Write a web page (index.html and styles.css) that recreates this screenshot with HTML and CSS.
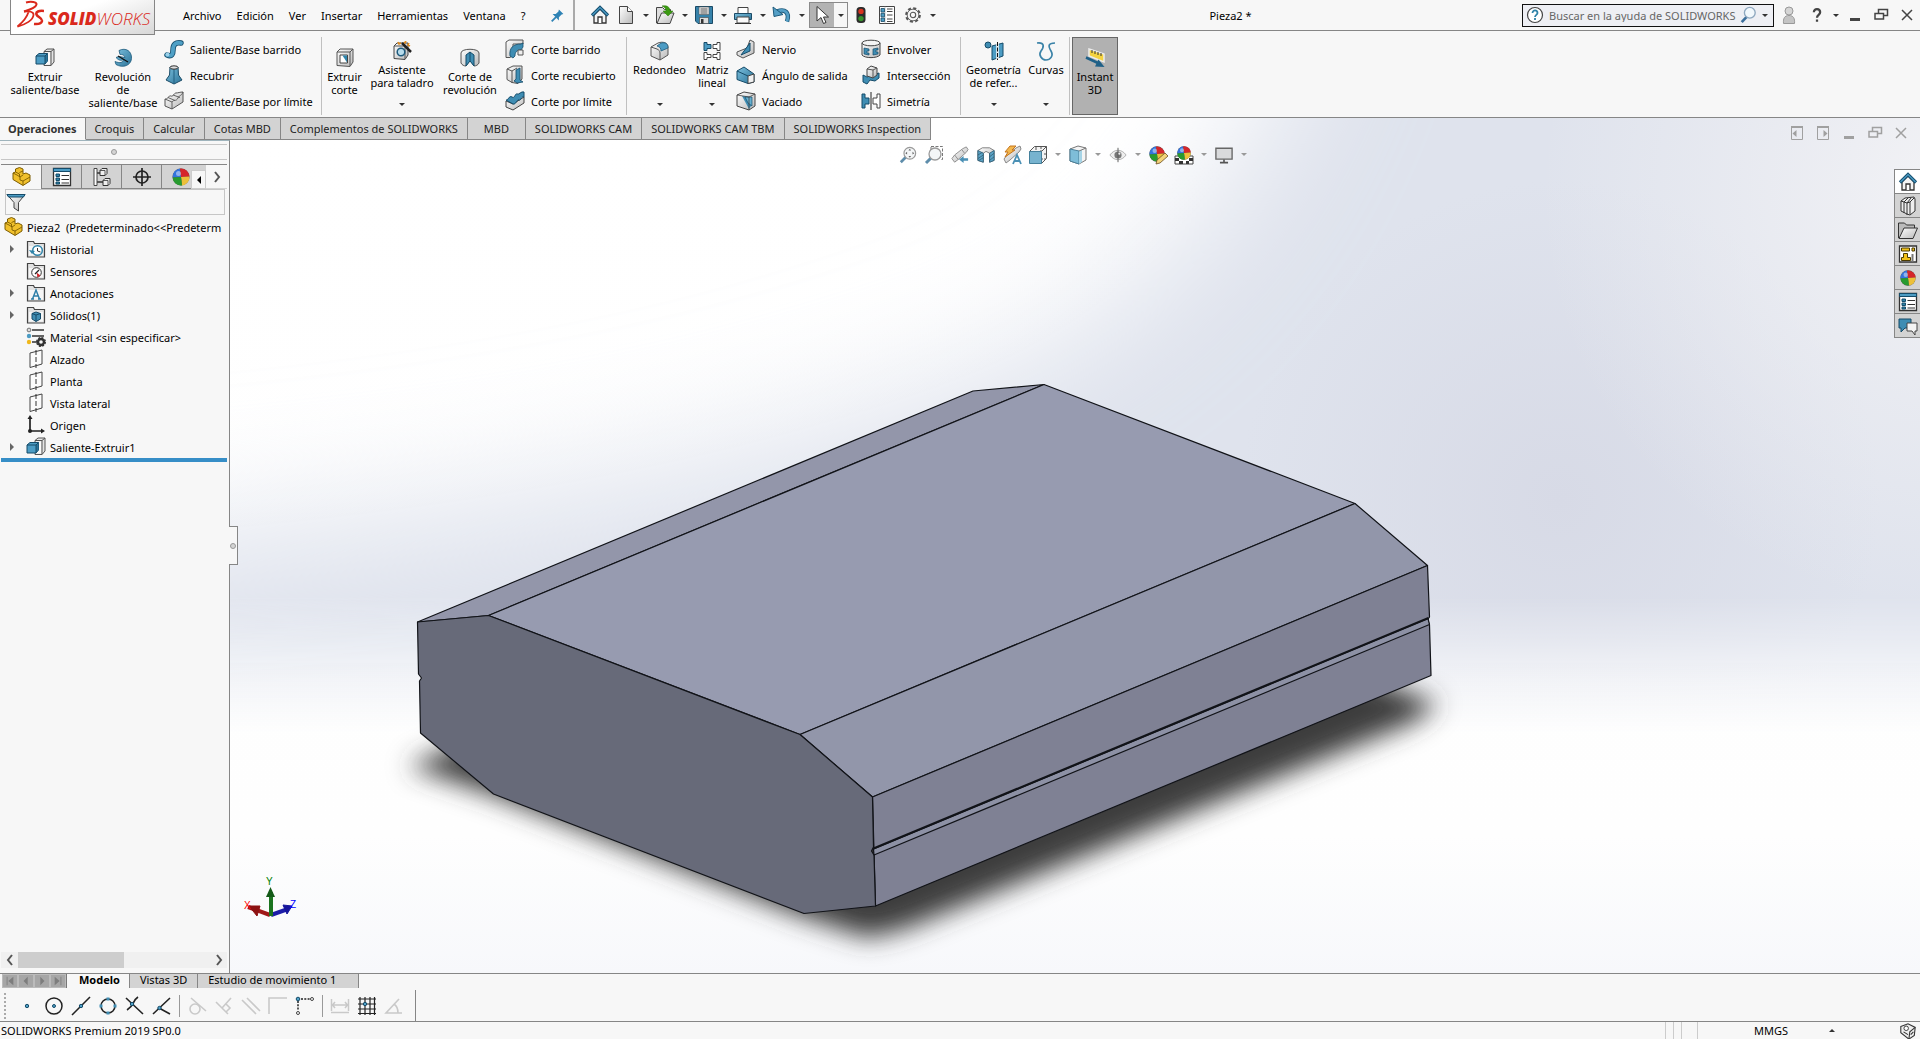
FILE: index.html
```html
<!DOCTYPE html>
<html lang="es">
<head>
  <meta charset="utf-8">
  <meta name="viewport" content="width=device-width">
  <title>Pieza2 - SOLIDWORKS</title>
  <link rel="stylesheet" href="styles.css">
</head>
<body>
  <!-- icon set, all on a 20 x 20 grid -->
  <svg class="symbols" aria-hidden="true">
    <defs>
      <linearGradient id="g-blue" x1="0" y1="0" x2="1" y2="1"><stop offset="0" stop-color="#7cc0de"/><stop offset="1" stop-color="#2b7398"/></linearGradient>
      <linearGradient id="g-grey" x1="0" y1="0" x2="1" y2="1"><stop offset="0" stop-color="#fff"/><stop offset="1" stop-color="#b9b9b9"/></linearGradient>
    </defs>
    <symbol id="i-pin" viewBox="0 0 20 20"><path d="M11 4l5 5-2 .5-3 3 0 3.500-7-7 3.500 0 3-3z" fill="#2f83b5"/><path d="M8 12l-5 5" stroke="#2f83b5" stroke-width="2"/></symbol>
    <symbol id="i-home" viewBox="0 0 20 20"><path d="M4 10v8h12v-8l-6-6z" fill="#f4f4f4" stroke="#333" stroke-width="1.300"/><path d="M8 18v-6h4v6" fill="#fff" stroke="#333" stroke-width="1.300"/><path d="M2 10.500l8-8 8 8" fill="none" stroke="#154f70" stroke-width="3.200"/><path d="M2.500 10l7.500-7.500 7.500 7.500" fill="none" stroke="#4c9cc4" stroke-width="1.200"/></symbol>
    <symbol id="i-doc" viewBox="0 0 20 20"><path d="M3.500 1.500h8l5 5v12h-13z" fill="url(#g-grey)" stroke="#444"/><path d="M11.500 1.500v5h5" fill="#fff" stroke="#444"/></symbol>
    <symbol id="i-open" viewBox="0 0 20 20"><path d="M1.500 18V2.500h6l2 2h6V8" fill="#ddd" stroke="#444"/><path d="M2 18.500L6.500 8H19l-4 10.500z" fill="url(#g-grey)" stroke="#444"/><path d="M7 1c5-1 8 1 8 5h3l-5 5-5-5h3c0-2-1-4-4-5z" fill="#3c9a12" stroke="#2b7a08" stroke-width=".5"/></symbol>
    <symbol id="i-save" viewBox="0 0 20 20"><path d="M1.500 1.500h17v17H4l-2.500-2.500z" fill="#3682aa" stroke="#1b4a66"/><path d="M5 2h10v7.500H5z" fill="#eee" stroke="#555" stroke-width=".6"/><path d="M6.500 4h7M6.500 6h7M6.500 8h7" stroke="#555"/><path d="M5.500 12.500h9v6h-9z" fill="#ddd" stroke="#444" stroke-width=".6"/><path d="M7 14h2.500v4.500H7z" fill="#333"/></symbol>
    <symbol id="i-print" viewBox="0 0 20 20"><path d="M5 8V2.500h10V8" fill="#fff" stroke="#444"/><path d="M1.500 8.500h17v6h-17z" fill="url(#g-blue)" stroke="#1b4a66"/><path d="M4 12h12v6H4z" fill="#fafafa" stroke="#444"/><path d="M2 18.500h16" stroke="#333"/></symbol>
    <symbol id="i-undo" viewBox="0 0 20 20"><path d="M5 6.500c8-3 13 1 10 10" fill="none" stroke="#1d5a7c" stroke-width="4.500"/><path d="M5 6.500c8-3 13 1 10 10" fill="none" stroke="#549fc6" stroke-width="2.800"/><path d="M1 2l1 9.500 9-2z" fill="#549fc6" stroke="#1d5a7c"/></symbol>
    <symbol id="i-cursor" viewBox="0 0 20 20"><path d="M5 1.500v14.500l4-3.500 2.500 6 2.500-1-2.500-5.500h5z" fill="#fff" stroke="#333"/></symbol>
    <symbol id="i-traffic" viewBox="0 0 20 20"><rect x="5" y="1" width="10" height="18" rx="4" fill="#2c2c2c"/><circle cx="10" cy="6" r="3" fill="#d9331f"/><circle cx="10" cy="14" r="3" fill="#37922c"/></symbol>
    <symbol id="i-options" viewBox="0 0 20 20"><path d="M2.500 1.500h15v17h-15z" fill="#fff" stroke="#444"/><path d="M8 1.500v17" stroke="#aaa" stroke-width=".6"/><path d="M4 3.500h3.500v3.500H4zM4 8.300h3.500v3.500H4zM4 13h3.500v3.500H4z" fill="#4c9cc4" stroke="#1b4a66" stroke-width=".8"/><path d="M10 4h5.500M10 6.500h5.500M10 10h5.500M10 14h5.500M10 16.500h5.500" stroke="#444"/></symbol>
    <symbol id="i-gear" viewBox="0 0 20 20"><circle cx="10" cy="10" r="7.500" fill="none" stroke="#555" stroke-width="2.500" stroke-dasharray="3.400 2.490"/><circle cx="10" cy="10" r="6.500" fill="#f7f7f7" stroke="#555"/><circle cx="10" cy="10" r="3" fill="#f7f7f7" stroke="#555" stroke-width="1.200"/></symbol>
    <symbol id="i-help" viewBox="0 0 20 20"><circle cx="10" cy="10" r="7.500" fill="#fff" stroke="#444" stroke-width="1.200"/><path d="M7.500 8c0-3.500 5-3.300 5 0 0 1.800-2.500 2-2.500 4M10 13v2" fill="none" stroke="#2f83a8" stroke-width="1.800"/></symbol>
    <symbol id="i-question" viewBox="0 0 20 20"><path d="M6.500 7c0-5 7-4.500 7 0 0 2.800-3.500 2.800-3.500 6M10 15v2.500" fill="none" stroke="#444" stroke-width="2.500"/></symbol>
    <symbol id="i-lens" viewBox="0 0 20 20"><path d="M8.500 12L3 18" stroke="#3c6f9c" stroke-width="3"/><circle cx="12" cy="7.500" r="6" fill="#f2f8fc" stroke="#8fa8bf" stroke-width="1.500"/></symbol>
    <symbol id="i-user" viewBox="0 0 20 20"><path d="M4.500 18.500c-.5-5 1-8 5.500-8s6 3 5.500 8z" fill="#c4c4c4" stroke="#999"/><circle cx="10" cy="6" r="4" fill="#d5d5d5" stroke="#999"/></symbol>
    <symbol id="i-min" viewBox="0 0 20 20"><path d="M5 14.500h10" stroke="currentColor" stroke-width="3"/></symbol>
    <symbol id="i-restore" viewBox="0 0 20 20"><path d="M7.500 8V4.500h9v6H13" fill="none" stroke="currentColor" stroke-width="1.500"/><path d="M4 8.500h8.500V14H4z" fill="none" stroke="currentColor" stroke-width="1.500"/></symbol>
    <symbol id="i-close" viewBox="0 0 20 20"><path d="M5 5l10 10M15 5L5 15" stroke="currentColor" stroke-width="1.500"/></symbol>
    <symbol id="i-paneleft" viewBox="0 0 20 20"><path d="M4.500 4h11v12.500h-11z" fill="none" stroke="currentColor"/><path d="M4 4h12" stroke="currentColor" stroke-width="2"/><path d="M9.500 7v7L5.500 10.500z" fill="currentColor"/></symbol>
    <symbol id="i-paneright" viewBox="0 0 20 20"><path d="M4.500 4h11v12.500h-11z" fill="none" stroke="currentColor"/><path d="M4 4h12" stroke="currentColor" stroke-width="2"/><path d="M10.500 7v7l4-3.500z" fill="currentColor"/></symbol>

    <symbol id="i-extrude" viewBox="0 0 20 20"><path d="M9 3.500l3-2.500h7v13l-3 3.500H9z" fill="#e4e4e4" stroke="#555"/><path d="M9 3.500h7v14M16 3.500L19 1" fill="none" stroke="#555"/><path d="M10 4.500h5v12h-5z" fill="#fafafa"/><path d="M1 8l3-2.500h8.500V13L10 16H1z" fill="#4c9cc4" stroke="#154b69"/><path d="M10 8l2.500-2.500V13L10 16z" fill="#2b7398"/><path d="M1 8h9v8M10 8l2.500-2.500" fill="none" stroke="#154b69"/></symbol>
    <symbol id="i-revolve" viewBox="0 0 20 20"><path d="M6 2.500c7-3.500 13 1 12.500 8S10 20.500 3 16.500l-1-3c5 2 8 1 9-2-4 2-6 0-8-2l3-1 6 1c-1-3-3-3-5-3z" fill="url(#g-blue)" stroke="#1d5a7c" stroke-width=".8"/><path d="M5 8l10 6" stroke="#111" stroke-width="1.300"/></symbol>
    <symbol id="i-sweep" viewBox="0 0 20 20"><path d="M3 16c5 2 6-1 6-5 0-6 3-8 8-7" fill="none" stroke="#164e6d" stroke-width="5.500" stroke-linecap="round"/><path d="M3 16c5 2 6-1 6-5 0-6 3-8 8-7" fill="none" stroke="#4fa0c6" stroke-width="3.800" stroke-linecap="round"/><circle cx="3.500" cy="15.500" r="1.900" fill="#9bd0e8"/></symbol>
    <symbol id="i-loft" viewBox="0 0 20 20"><path d="M6 2h8l.5 8 3.500 5-8 4-8-4 3.500-5z" fill="url(#g-blue)" stroke="#1d4d68"/><path d="M10 3v16" stroke="#205f80"/><ellipse cx="10" cy="2.500" rx="4" ry="1.700" fill="#ddd" stroke="#333"/></symbol>
    <symbol id="i-boundary" viewBox="0 0 20 20"><path d="M1 8c2 1 4-4 6-3s3-3 5-3 4-1 7-1v10l-11 7-7-3z" fill="url(#g-grey)" stroke="#555"/><path d="M1 8l7 3c2-3 4 0 6-4s3-1 5-6M8 11v7M4 6.500l7 3M9 4l7 2.500" fill="none" stroke="#555" stroke-width=".9"/></symbol>
    <symbol id="i-cutextrude" viewBox="0 0 20 20"><path d="M2 4l3-3h13v13l-3 4.500-13-1z" fill="url(#g-grey)" stroke="#555"/><path d="M2 4h13v14M15 4l3-3" fill="none" stroke="#555"/><path d="M5 7h7.500v8H5z" fill="#fff" stroke="#444"/><path d="M7.500 7.500H12v7z" fill="#2f86ad"/></symbol>
    <symbol id="i-hole" viewBox="0 0 20 20"><path d="M2 5l3-3h11v12l-3 4.500-11-1z" fill="url(#g-grey)" stroke="#444"/><path d="M2 5h11v13" fill="none" stroke="#555"/><circle cx="9" cy="11" r="3.800" fill="#b8dcec" stroke="#1d5a7c" stroke-width="1.500"/><path d="M10 2l9 9" stroke="#222" stroke-width="2.500"/><path d="M6 1l1 2 2-1M12 1l1 1 1-2M17 2l-1 2 2 1" stroke="#e08a1c" stroke-width="1.500" fill="none"/></symbol>
    <symbol id="i-cutrevolve" viewBox="0 0 20 20"><path d="M1 5c0-5 18-5 18 0v10c-1 2-3 3-5 3l-4-6-4 6c-2 0-4-1-5-3z" fill="url(#g-grey)" stroke="#555"/><path d="M6 7l4-3 4 3v11l-4-5-4 5z" fill="#3f8db3" stroke="#154b69"/><path d="M10 4v9" stroke="#154b69"/></symbol>
    <symbol id="i-cutsweep" viewBox="0 0 20 20"><path d="M1 3l3-2h14v4H8v11l-3 2.500H1z" fill="url(#g-grey)" stroke="#555"/><path d="M5 17c-1-8 3-12 11-12l2-1v4l-2 3c-5 0-6 3-6 6l-2 2z" fill="#3f8db3" stroke="#154b69" stroke-width=".8"/><path d="M13 11h5v5h-5z" fill="#eee" stroke="#555"/></symbol>
    <symbol id="i-cutloft" viewBox="0 0 20 20"><path d="M2 4l6-3h9v13l-4 4.500-6-1-5-3z" fill="url(#g-grey)" stroke="#555"/><path d="M2 4l5 2v12M7 6l5-3" fill="none" stroke="#555"/><path d="M11 5l4-2v12l3 2-6 1-3-2 2-2z" fill="#3f8db3" stroke="#154b69" stroke-width=".8"/></symbol>
    <symbol id="i-cutboundary" viewBox="0 0 20 20"><path d="M1 10l7 3 11-7v6l-11 7-7-3z" fill="url(#g-grey)" stroke="#444"/><path d="M1 9c2 1 3-5 6-3s3-4 5-3 4-3 7-2v5c-3-1-3 4-5 3s-3 5-6 4z" fill="#3f8db3" stroke="#154b69"/></symbol>
    <symbol id="i-fillet" viewBox="0 0 20 20"><path d="M1 6l7-4c5-2 10 0 10 4v8l-8 5-9-4z" fill="url(#g-grey)" stroke="#555"/><path d="M1 6l6 2c2 1 3 2 3 4v7" fill="none" stroke="#555"/><path d="M7 5l4-3c5-1 7 1 7 5l-7 3c0-3-1-4-4-5z" fill="#4c9cc4" stroke="#1d5a7c" stroke-width=".8"/></symbol>
    <symbol id="i-pattern" viewBox="0 0 20 20"><path d="M2 1.500h3v2h4v4H5v2H2z" fill="#4c9cc4" stroke="#154b69"/><path d="M18 1.500h-3v2h-4v4h4v2h3zM2 11.500h3v2h4v3H5v2H2zM18 11.500h-3v2h-4v3h4v2h3z" fill="#fff" stroke="#444"/></symbol>
    <symbol id="i-rib" viewBox="0 0 20 20"><path d="M14 1l4 2v11l-11 5-6-3v-3l10-4z" fill="url(#g-grey)" stroke="#555"/><path d="M14 4v8l-9 4z" fill="#3f8db3" stroke="#154b69"/></symbol>
    <symbol id="i-draft" viewBox="0 0 20 20"><path d="M1 6l7-4 10 7v8l-6 1.500-11-4z" fill="url(#g-blue)" stroke="#154b69"/><path d="M12 11l6-2v8l-6 1.500z" fill="#f0f0f0" stroke="#444"/><path d="M1 6l11 5" stroke="#154b69"/></symbol>
    <symbol id="i-shell" viewBox="0 0 20 20"><path d="M1 4l7-3 11 2v12l-6 4-12-4z" fill="url(#g-grey)" stroke="#444"/><path d="M6 5l9 1v9l-2 3z" fill="#3f8db3"/><path d="M9 6h7v9l-4-3z" fill="#65b0d0" stroke="#154b69" stroke-width=".7"/><path d="M1 4l12 2v13M13 6l6-3" fill="none" stroke="#444" stroke-width=".8"/></symbol>
    <symbol id="i-wrap" viewBox="0 0 20 20"><path d="M1 4v12c3 3.500 15 3.500 18 0V4" fill="url(#g-grey)" stroke="#444"/><ellipse cx="10" cy="4" rx="9" ry="2.800" fill="#f5f5f5" stroke="#444"/><path d="M3 9l5 1v2H6v2h2v2l-5-1zM17 9l-5 1v6l5-1v-2h-2v-2h2z" fill="#3f8db3" stroke="#154b69" stroke-width=".7"/></symbol>
    <symbol id="i-intersect" viewBox="0 0 20 20"><path d="M2 10l4 2 12-4v5l-4 3-5-1-3 4-4-2z" fill="#3f8db3" stroke="#154b69"/><path d="M6 4l4-3 6 2v7l-4 3-6-2z" fill="url(#g-grey)" stroke="#444"/><path d="M6 4l6 1v8M12 5l4-2" fill="none" stroke="#555"/></symbol>
    <symbol id="i-mirror" viewBox="0 0 20 20"><path d="M1 3h3v4h4v6H4v4H1z" fill="#3f8db3" stroke="#154b69"/><path d="M19 3h-3v4h-4v6h4v4h3z" fill="#fff" stroke="#444"/><path d="M10 1v18" stroke="#222"/></symbol>
    <symbol id="i-refgeom" viewBox="0 0 20 20"><circle cx="4" cy="4" r="3" fill="#3f8db3" stroke="#154b69"/><path d="M8 5l11-3v13l-11 4z" fill="#4c9cc4" stroke="#154b69"/><path d="M13.500 1v18" stroke="#f7f7f7" stroke-width="2.500"/><path d="M13.500 1v18" stroke="#111" stroke-dasharray="4 1.500"/></symbol>
    <symbol id="i-curves" viewBox="0 0 20 20"><path d="M1 2c8-1 7 4 4 8s1 9 5 9 8-4 5-9-3-8 4-8" fill="none" stroke="#3b83a8" stroke-width="1.700"/></symbol>
    <symbol id="i-instant" viewBox="0 0 20 20"><path d="M4 1l15 5v8L4 8z" fill="#f5d33f" stroke="#ececec" stroke-width="1.500"/><path d="M7 2v3M10 3v3M13 4v3M16 5v3" stroke="#333"/><path d="M1 9.500l12 5.500" stroke="#1f6087" stroke-width="2.500"/><path d="M13.500 11.500l6 7.500-9.500-.5z" fill="#1f6087"/></symbol>

    <symbol id="i-zoomfit" viewBox="0 0 20 20"><path d="M8 12l-6 6" stroke="#5e8dab" stroke-width="3"/><circle cx="12" cy="8" r="6.500" fill="#f4f6f7" stroke="#9a9a9a" stroke-width="1.300"/><path d="M12 3l1.500 2h-3zM12 13l1.500-2h-3zM7 8l2-1.500v3zM17 8l-2-1.500v3z" fill="#666"/></symbol>
    <symbol id="i-zoomarea" viewBox="0 0 20 20"><path d="M7 1.500h11.500v13H16M7 2v3" fill="none" stroke="#777" stroke-dasharray="3 1.500"/><path d="M7 13l-5 5" stroke="#5e8dab" stroke-width="3"/><circle cx="11" cy="9" r="6" fill="#f4f6f7" stroke="#9a9a9a" stroke-width="1.300"/></symbol>
    <symbol id="i-prevview" viewBox="0 0 20 20"><path d="M1 14l3-4 9-7 4-2 2 3-2 3-9 8-4 3z" fill="url(#g-grey)" stroke="#888"/><path d="M12 4l3 4M4 10l4 5" stroke="#888"/><path d="M9 15l5-4v2.500h5v3h-5V19z" fill="#4a90b5"/></symbol>
    <symbol id="i-section" viewBox="0 0 20 20"><path d="M1 5l5-3h8l5 3v11l-5 2V8l-4-2-3 2v10l-6-2z" fill="url(#g-grey)" stroke="#777"/><path d="M1 5l6 3v10l-6-2zM19 5l-5 3v10l5-2z" fill="#5ba4c7" stroke="#33637c"/><path d="M1 10l5-3M1 14l6-4M2 16l5-3M14 12l5-4M14 16l5-4" stroke="#2d566c" stroke-width=".8"/></symbol>
    <symbol id="i-dynview" viewBox="0 0 20 20"><path d="M2 14l3-4 9-7 4-2 1 3-2 3-9 8-4 3z" fill="url(#g-grey)" stroke="#888"/><path d="M8 1h6l-4 4h3L3 12l3-5H3z" fill="#f3b74d" stroke="#c4751e"/><path d="M11 19l4-9 4 9M12.500 16h5" fill="none" stroke="#4a90b5" stroke-width="1.800"/></symbol>
    <symbol id="i-orient" viewBox="0 0 20 20"><path d="M1.500 6.500l5-5h12v12l-5 5" fill="#f3f3f3" stroke="#555"/><path d="M8 2v12h10M13 1v5M19 9h-4" fill="none" stroke="#555" stroke-dasharray="3 1"/><path d="M1.500 6.500h12v12h-12z" fill="#77b3cf" stroke="#44809c"/><path d="M13.500 6.500l5-5" stroke="#555"/></symbol>
    <symbol id="i-display" viewBox="0 0 20 20"><path d="M2 4l8-3 8 2v12l-7 4-9-3z" fill="#f4f4f4" stroke="#777"/><path d="M2 4l9 2v13l-9-3z" fill="#7ebdd8" stroke="#4a7f99"/><path d="M14 5v12l-3 2V6z" fill="#a6d4e6"/><path d="M11 6l7-3" stroke="#777"/></symbol>
    <symbol id="i-eye" viewBox="0 0 20 20"><path d="M1 10c5-7 13-7 18 0-5 7-13 7-18 0z" fill="#eee" stroke="#aaa"/><circle cx="10" cy="10" r="4" fill="#777"/><path d="M10 2v16" stroke="#555"/><circle cx="11.500" cy="8.500" r="1.200" fill="#eee"/></symbol>
    <symbol id="i-ball" viewBox="0 0 20 20"><circle cx="10" cy="10" r="8.500" fill="#555"/><path d="M10 10L9 1.600A8.500 8.500 0 0 0 1.600 10.500z" fill="#3474dd"/><path d="M10 10L9 1.600A8.500 8.500 0 0 1 18.500 9.500z" fill="#d5262b"/><path d="M10 10l8.500-.5A8.500 8.500 0 0 1 11 18.400z" fill="#ecc03a"/><path d="M10 10l-8.400.5A8.500 8.500 0 0 0 11 18.400z" fill="#279b2f"/><circle cx="7.500" cy="6.500" r="2.500" fill="#fff" opacity=".45"/></symbol>
    <symbol id="i-appearance" viewBox="0 0 20 20"><use href="#i-ball" width="18" height="18"/><path d="M8 19l1-4 8-7 3 3-8 7z" fill="#f3d37a" stroke="#6b4b1e" stroke-width=".8"/></symbol>
    <symbol id="i-scene" viewBox="0 0 20 20"><path d="M1 11h18v8H1z" fill="#fff" stroke="#444"/><path d="M1 13h4v3H1zM15 13h4v3h-4zM5 16h4v3H5zM12 16h3v3h-3z" fill="#333"/><use href="#i-ball" x="2" width="16" height="16"/></symbol>
    <symbol id="i-monitor" viewBox="0 0 20 20"><path d="M1 2.500h18v12H1z" fill="#d9dadc" stroke="#666" stroke-width="1.500"/><path d="M10 15v3M5.500 18.500h9" stroke="#555" stroke-width="1.800"/></symbol>

    <symbol id="i-books" viewBox="0 0 20 20"><path d="M3 5l4-3 9-1 1 2v12l-5 4-3-1-6-3z" fill="#eee" stroke="#333"/><path d="M6 6v11M9 7v12M12 6v12M3 5l3 1 4-4M6 6l3 1 4-5M9 7l3-1 4-4" fill="none" stroke="#333"/></symbol>
    <symbol id="i-folder" viewBox="0 0 20 20"><path d="M.5 18V3h6l2 2h8v4" fill="#bbb" stroke="#333"/><path d="M1 18.500L6 8h13.500L15 18.500z" fill="url(#g-grey)" stroke="#333"/></symbol>
    <symbol id="i-palette" viewBox="0 0 20 20"><path d="M1.500 2h17v16h-17z" fill="#fff" stroke="#333" stroke-width="1.300"/><path d="M3.500 4h8v3h-8zM14 4h2.500v3H14zM5.500 9.500h4v4h3v3h-9v-3h2z" fill="#f2c21b" stroke="#4a3a00"/><path d="M14.500 10v8" stroke="#777" stroke-width="2"/></symbol>
    <symbol id="i-props" viewBox="0 0 20 20"><path d="M1.500 1.500h17v17h-17z" fill="#fff" stroke="#333" stroke-width="1.300"/><path d="M1.500 1.500h17v3h-17z" fill="#4c9cc4" stroke="#154b69"/><path d="M4 7h3.500v2.500H4zM4 11h3.500v2.500H4zM4 15h3.500v2H4z" fill="#2f83a8" stroke="#154b69"/><path d="M9.500 8.500H17M9.500 12.500H17M9.500 16H17" stroke="#333" stroke-width="1.200"/></symbol>
    <symbol id="i-chat" viewBox="0 0 20 20"><path d="M1 3h12v9H7l-4 4v-4H1z" fill="#3f8db3" stroke="#154b69"/><path d="M9 7h10v8h-2v4l-3-4H9z" fill="#f4f4f4" stroke="#444"/></symbol>

    <symbol id="i-part" viewBox="0 0 20 20"><path d="M2 6l2.500-1V2l4-1.500L12 2v5l3-1 4 2v6l-7 4.500L2 12.500z" fill="#f0c02c" stroke="#7d5c00"/><path d="M2 6l4 2 3 2v3l3 1v4M4.500 5l4 2v3M8.500 5.500L12 4M12 14l7-4M9 10l3-2" fill="none" stroke="#7d5c00" stroke-width=".9"/></symbol>
    <symbol id="i-config" viewBox="0 0 20 20"><path d="M5 6h3M5 15h6" fill="none" stroke="#333" stroke-width="1.300"/><path d="M2 1.500h3v17H2z" fill="#fff" stroke="#444"/><path d="M8 3.500l2-2h5v5l-2 2H8zM11 13.500l2-2h5v5l-2 2h-5z" fill="#eee" stroke="#333"/><path d="M8 3.500h5v5M11 13.500h5v5" fill="none" stroke="#333" stroke-width=".8"/></symbol>
    <symbol id="i-target" viewBox="0 0 20 20"><circle cx="10" cy="10" r="6" fill="none" stroke="#222" stroke-width="1.700"/><path d="M10 1v18M1 10h18" stroke="#222" stroke-width="1.700"/></symbol>
    <symbol id="i-filter" viewBox="0 0 20 20"><path d="M1 2.500h18l-6.500 8V19L8 16v-5.500z" fill="url(#g-grey)" stroke="#444"/><path d="M1 2.500h18L17.500 5h-15z" fill="#4c9cc4" stroke="#154b69"/></symbol>
    <symbol id="i-fold" viewBox="0 0 20 20"><path d="M1.500 18V2.500h6l1 2h10V18z" fill="#e2e2e2" stroke="#444" stroke-width="1.200"/><path d="M3 7h14v9.500H3z" fill="#f6f6f6"/></symbol>
    <symbol id="i-history" viewBox="0 0 20 20"><use href="#i-fold"/><circle cx="11.500" cy="11.500" r="4.800" fill="#fff" stroke="#2f83a8" stroke-width="1.500"/><path d="M11.500 9v3l3 1" fill="none" stroke="#333"/><path d="M3 11l3 4 3-3z" fill="#2f83a8"/></symbol>
    <symbol id="i-sensor" viewBox="0 0 20 20"><use href="#i-fold"/><circle cx="10.500" cy="11.500" r="4.800" fill="#fff" stroke="#333"/><path d="M10.500 11.500l4 3-3 2z" fill="#d5262b"/><path d="M9 13l4-4" stroke="#222" stroke-width="1.300"/></symbol>
    <symbol id="i-annot" viewBox="0 0 20 20"><use href="#i-fold"/><path d="M6.500 16l3.500-9 3.500 9M7.500 13h5M5 16h3M12 16h3" fill="none" stroke="#2f7fa8" stroke-width="1.500"/></symbol>
    <symbol id="i-solids" viewBox="0 0 20 20"><use href="#i-fold"/><path d="M6 8.500L10 7l4.500 1.500V14L10 16.500 6 14z" fill="#3f8db3" stroke="#154b69"/><path d="M6 8.500l4 1.500v6.500M10 10l4.500-1.500" fill="none" stroke="#154b69"/></symbol>
    <symbol id="i-material" viewBox="0 0 20 20"><path d="M6 3h12M6 9h12M6 15h6" stroke="#333" stroke-width="1.500"/><circle cx="3" cy="3" r="1.900" fill="#ddd" stroke="#444" stroke-width=".7"/><circle cx="3" cy="9" r="2.200" fill="#4c9cc4"/><circle cx="3" cy="15" r="2.200" fill="#f0b81c"/><circle cx="15" cy="15" r="3" fill="none" stroke="#333" stroke-width="2.400"/><circle cx="15" cy="15" r="4.400" fill="none" stroke="#333" stroke-width="1.200" stroke-dasharray="2 1.450"/></symbol>
    <symbol id="i-plane" viewBox="0 0 20 20"><path d="M4 4l12-3v14L4 18.500z" fill="#fbfbfb" stroke="#444"/><path d="M10 1v18" stroke="#333" stroke-dasharray="5 2"/></symbol>
    <symbol id="i-origin" viewBox="0 0 20 20"><path d="M4 3v13h12" fill="none" stroke="#222" stroke-width="1.700"/><path d="M4 0l2.500 4h-5zM19 16l-4-2.500v5z" fill="#222"/><circle cx="4" cy="16" r="2" fill="#222"/></symbol>

    <symbol id="i-s-point" viewBox="0 0 20 20"><circle cx="10" cy="10" r="1.700" fill="#4fa0c6" stroke="#154b69"/></symbol>
    <symbol id="i-s-circle" viewBox="0 0 20 20"><circle cx="10" cy="10" r="8" fill="none" stroke="#222" stroke-width="1.500"/><circle cx="10" cy="10" r="1.500" fill="#4fa0c6" stroke="#154b69"/></symbol>
    <symbol id="i-s-mid" viewBox="0 0 20 20"><path d="M1 19L19 1" stroke="#222" stroke-width="1.600"/><circle cx="10" cy="10" r="1.700" fill="#4fa0c6" stroke="#154b69"/></symbol>
    <symbol id="i-s-quad" viewBox="0 0 20 20"><circle cx="10" cy="10" r="7" fill="none" stroke="#222" stroke-width="1.500"/><path d="M10 1.500v3M10 15.500v3M1.500 10h3M15.500 10h3" stroke="#3f8db3" stroke-width="3"/></symbol>
    <symbol id="i-s-inter" viewBox="0 0 20 20"><path d="M1 2l17 16M13 1C7 5 10 9 2 14" fill="none" stroke="#222" stroke-width="1.600"/><circle cx="7" cy="8" r="1.700" fill="#4fa0c6" stroke="#154b69"/></symbol>
    <symbol id="i-s-near" viewBox="0 0 20 20"><path d="M1 18L18 2M7 12l11 6" stroke="#222" stroke-width="1.600"/><circle cx="7.500" cy="12" r="1.700" fill="#4fa0c6" stroke="#154b69"/></symbol>
    <symbol id="i-s-tan" viewBox="0 0 20 20"><circle cx="8" cy="13" r="5" fill="none" stroke="#c9c9c9" stroke-width="1.600"/><path d="M4 2l15 13" stroke="#c9c9c9" stroke-width="1.600"/></symbol>
    <symbol id="i-s-perp" viewBox="0 0 20 20"><path d="M2 6l12 12M17 2L8 12M12 8l4 4-4 4" fill="none" stroke="#c9c9c9" stroke-width="1.600"/></symbol>
    <symbol id="i-s-par" viewBox="0 0 20 20"><path d="M6 2l13 13M1 4l14 14" stroke="#c9c9c9" stroke-width="1.600"/></symbol>
    <symbol id="i-s-hv" viewBox="0 0 20 20"><path d="M1 18V2h18" fill="none" stroke="#c9c9c9" stroke-width="1.600"/></symbol>
    <symbol id="i-s-hvp" viewBox="0 0 20 20"><path d="M3 5v10M6 3h10" stroke="#222" stroke-width="1.500" stroke-dasharray="2 1.300"/><circle cx="3" cy="3" r="1.800" fill="#4fa0c6" stroke="#154b69"/><circle cx="17" cy="3" r="1.500" fill="#fff" stroke="#444"/><circle cx="3" cy="17" r="1.500" fill="#fff" stroke="#444"/></symbol>
    <symbol id="i-s-len" viewBox="0 0 20 20"><path d="M1.500 3v12M18.500 3v12M3 9h14M1 16.500h18M5 6L2.500 9 5 12M15 6l2.500 3-2.500 3" fill="none" stroke="#c9c9c9" stroke-width="1.500"/></symbol>
    <symbol id="i-s-grid" viewBox="0 0 20 20"><path d="M3 1v18M8 1v18M13 1v18M17.500 1v18M1 3h18M1 8h18M1 13h18M1 17.500h18" stroke="#222" stroke-width="1.200"/><circle cx="8" cy="8" r="1.700" fill="#4fa0c6" stroke="#154b69"/></symbol>
    <symbol id="i-s-ang" viewBox="0 0 20 20"><path d="M18 17H2L15 3M10 8c3 2 4 5 4 9" fill="none" stroke="#c9c9c9" stroke-width="1.600"/></symbol>
    <symbol id="i-tag" viewBox="0 0 20 20"><path d="M2 5l8-3 8 4-1 9-6 4-9-7z" fill="#eee" stroke="#333" stroke-width="1.200"/><circle cx="8" cy="7" r="2.500" fill="#fff" stroke="#333"/><path d="M11 19l1-8 6-5M5 11l5 3M13 14l3-3" fill="none" stroke="#333" stroke-width="1.200"/></symbol>
  </svg>

  <header class="titlebar">
    <div class="logo">
      <svg class="logo-mark" viewBox="0 0 28 28" aria-hidden="true">
        <g fill="none" stroke="#da291c">
          <path d="M10 2.500C15 1 21 2 20.500 4.500 20 7 13 10 8 11.500" stroke-width="2"/>
          <path d="M8 11.500c5-.5 10 0 9.500 3.500C17 20 10 24.500 1.500 26.500 7 22 11 17 12.500 12" stroke-width="1.800"/>
          <path d="M28 11c-5-.6-8.500.8-7.500 3.500s6 3.500 5.500 6.500c-.4 2-3 3.500-8 3" stroke-width="2.500"/>
        </g>
      </svg>
      <span class="logo-text"><b>SOLID</b>WORKS</span>
    </div>
    <nav class="menu">
      <a href="#">Archivo</a>
      <a href="#">Edición</a>
      <a href="#">Ver</a>
      <a href="#">Insertar</a>
      <a href="#">Herramientas</a>
      <a href="#">Ventana</a>
      <a href="#">?</a>
    </nav>
    <button class="pin" aria-label="Fijar menú"><svg class="icon small"><use href="#i-pin"/></svg></button>
    <div class="quick">
      <button class="q" aria-label="Inicio"><svg class="icon"><use href="#i-home"/></svg></button>
      <button class="q" aria-label="Nuevo"><svg class="icon"><use href="#i-doc"/></svg></button><button class="drop" aria-label="Más"></button>
      <button class="q" aria-label="Abrir"><svg class="icon"><use href="#i-open"/></svg></button><button class="drop" aria-label="Más"></button>
      <button class="q" aria-label="Guardar"><svg class="icon"><use href="#i-save"/></svg></button><button class="drop" aria-label="Más"></button>
      <button class="q" aria-label="Imprimir"><svg class="icon"><use href="#i-print"/></svg></button><button class="drop" aria-label="Más"></button>
      <button class="q" aria-label="Deshacer"><svg class="icon"><use href="#i-undo"/></svg></button><button class="drop" aria-label="Más"></button>
      <span class="select-tool">
        <button class="q" aria-label="Seleccionar"><svg class="icon"><use href="#i-cursor"/></svg></button><button class="drop" aria-label="Más"></button>
      </span>
      <button class="q" aria-label="Reconstruir"><svg class="icon small"><use href="#i-traffic"/></svg></button>
      <button class="q" aria-label="Propiedades"><svg class="icon"><use href="#i-options"/></svg></button>
      <button class="q" aria-label="Opciones"><svg class="icon small"><use href="#i-gear"/></svg></button><button class="drop" aria-label="Más"></button>
    </div>
    <h1 class="doc-title">Pieza2 *</h1>
    <form class="search">
      <svg class="icon"><use href="#i-help"/></svg>
      <input type="text" aria-label="Buscar en la ayuda" placeholder="Buscar en la ayuda de SOLIDWORKS">
      <button type="button" class="search-go" aria-label="Buscar"><svg class="icon small"><use href="#i-lens"/></svg></button>
      <button type="button" class="drop" aria-label="Más"></button>
    </form>
    <div class="window-controls">
      <button aria-label="Usuario"><svg class="icon"><use href="#i-user"/></svg></button>
      <button aria-label="Ayuda"><svg class="icon small"><use href="#i-question"/></svg></button>
      <button class="drop" aria-label="Más"></button>
      <button aria-label="Minimizar"><svg class="icon"><use href="#i-min"/></svg></button>
      <button aria-label="Restaurar"><svg class="icon"><use href="#i-restore"/></svg></button>
      <button aria-label="Cerrar"><svg class="icon"><use href="#i-close"/></svg></button>
    </div>
  </header>

  <div class="ribbon">
    <button class="tool w-base"><svg class="icon"><use href="#i-extrude"/></svg><span>Extruir<br>saliente/base</span></button>
    <button class="tool w-base"><svg class="icon"><use href="#i-revolve"/></svg><span>Revolución<br>de<br>saliente/base</span></button>
    <div class="stack first">
      <button><svg class="icon"><use href="#i-sweep"/></svg>Saliente/Base barrido</button>
      <button><svg class="icon"><use href="#i-loft"/></svg>Recubrir</button>
      <button><svg class="icon"><use href="#i-boundary"/></svg>Saliente/Base por límite</button>
    </div>
    <button class="tool sep w-narrow"><svg class="icon"><use href="#i-cutextrude"/></svg><span>Extruir<br>corte</span></button>
    <button class="tool more w-wide"><svg class="icon"><use href="#i-hole"/></svg><span>Asistente<br>para taladro</span></button>
    <button class="tool w-mid"><svg class="icon"><use href="#i-cutrevolve"/></svg><span>Corte de<br>revolución</span></button>
    <div class="stack second">
      <button><svg class="icon"><use href="#i-cutsweep"/></svg>Corte barrido</button>
      <button><svg class="icon"><use href="#i-cutloft"/></svg>Corte recubierto</button>
      <button><svg class="icon"><use href="#i-cutboundary"/></svg>Corte por límite</button>
    </div>
    <button class="tool more sep w-mid"><svg class="icon"><use href="#i-fillet"/></svg><span>Redondeo</span></button>
    <button class="tool more w-slim"><svg class="icon"><use href="#i-pattern"/></svg><span>Matriz<br>lineal</span></button>
    <div class="stack third">
      <button><svg class="icon"><use href="#i-rib"/></svg>Nervio</button>
      <button><svg class="icon"><use href="#i-draft"/></svg>Ángulo de salida</button>
      <button><svg class="icon"><use href="#i-shell"/></svg>Vaciado</button>
    </div>
    <div class="stack fourth">
      <button><svg class="icon"><use href="#i-wrap"/></svg>Envolver</button>
      <button><svg class="icon"><use href="#i-intersect"/></svg>Intersección</button>
      <button><svg class="icon"><use href="#i-mirror"/></svg>Simetría</button>
    </div>
    <button class="tool more sep w-mid"><svg class="icon"><use href="#i-refgeom"/></svg><span>Geometría<br>de refer...</span></button>
    <button class="tool more w-slim"><svg class="icon"><use href="#i-curves"/></svg><span>Curvas</span></button>
    <button class="tool active w-narrow"><svg class="icon"><use href="#i-instant"/></svg><span>Instant<br>3D</span></button>
  </div>

  <main class="workspace">
    <svg class="scene" viewBox="0 118 1920 855" preserveAspectRatio="xMidYMid slice" role="img" aria-label="Pieza2">
      <defs>
        <linearGradient id="floor" x1="0" y1="118" x2="0" y2="973" gradientUnits="userSpaceOnUse">
          <stop offset="0" stop-color="#fff"/><stop offset=".56" stop-color="#fff"/><stop offset=".61" stop-color="#b4b4b4"/><stop offset=".66" stop-color="#555"/><stop offset=".72" stop-color="#000"/>
        </linearGradient>
        <linearGradient id="ground" x1="0" y1="118" x2="0" y2="973" gradientUnits="userSpaceOnUse">
          <stop offset="0" stop-color="#fff"/><stop offset=".84" stop-color="#fefefe"/><stop offset="1" stop-color="#f7f8fb"/>
        </linearGradient>
        <radialGradient id="deep" cx="1560" cy="500" r="320" gradientUnits="userSpaceOnUse">
          <stop offset="0" stop-color="#d7dae6"/><stop offset="1" stop-color="#d7dae6" stop-opacity="0"/>
        </radialGradient>
        <radialGradient id="glow" cx="1960" cy="190" r="420" gradientUnits="userSpaceOnUse">
          <stop offset="0" stop-color="#f3f3f6"/><stop offset="1" stop-color="#f0f0f3" stop-opacity="0"/>
        </radialGradient>
        <mask id="horizon" maskUnits="userSpaceOnUse" x="0" y="118" width="1920" height="855"><rect x="0" y="118" width="1920" height="855" fill="url(#floor)"/></mask>
        <filter id="soft" x="-20%" y="-40%" width="140%" height="180%"><feGaussianBlur stdDeviation="65"/></filter>
        <filter id="shade" x="-10%" y="-20%" width="120%" height="140%"><feGaussianBlur stdDeviation="13"/></filter>
      </defs>
      <rect x="0" y="118" width="1920" height="855" fill="url(#ground)"/>
      <g mask="url(#horizon)">
        <path d="M1330-100C1280 180 1130 340 900 400 640 490 300 530 0 545V900H2200V-100z" fill="#dfe3ed" filter="url(#soft)"/>
        <rect x="1200" y="118" width="720" height="855" fill="url(#deep)"/>
        <rect x="1500" y="118" width="420" height="855" fill="url(#glow)"/>
      </g>
      <path d="M408 766L480 735 1350 670 1438 704 1412 723 905 929 868 938 800 916 490 794z" fill="#3c3c3c" filter="url(#shade)"/>

      <g stroke="#111318" stroke-width="1.200" stroke-linejoin="round">
        <path d="M417.500 622L973 391 1044 384.500 488.500 615.500z" fill="#9396aa"/>
        <path d="M488.500 615.500L1044 384.500 1355 503.500 800 734.500z" fill="#979bb0"/>
        <path d="M800 734.500L1355 503.500 1427.500 565.500 872.500 797z" fill="#9296aa"/>
        <path d="M872.500 797L1427.500 565.500 1429.500 617 1427.500 620 1429.500 625 1431 675.500 875.500 906z" fill="#7f8194"/>
        <path d="M417.500 622L488.500 615.500 800 734.500 872.500 797 873.500 847 871.500 851 874 855 875.500 906 804 913.500 493.500 794 420.500 733 419.500 681 421.500 678 418.500 674z" fill="#676a79"/>
        <path d="M873.500 849L1428 618.500 1429.500 624.500 874 855z" fill="#8d91a5"/>
        <path d="M873.500 848.500L1428.500 618" stroke-width="2.200"/>
      </g>

      <g class="triad">
        <path d="M270 915l-22-8" stroke="#a01818" stroke-width="4"/><path d="M249 906l8 10 3-10z" fill="#8d1212" stroke="#8d1212"/>
        <path d="M271 915l17-6" stroke="#1c1ca8" stroke-width="4"/><path d="M292 906l-9-1 4 9z" fill="#15159b" stroke="#15159b"/>
        <path d="M271 916v-24" stroke="#1b741f" stroke-width="4"/><path d="M270.500 887l4.500 10h-9z" fill="#145a18"/>
        <text x="244" y="909" fill="#f00">X</text>
        <text x="266" y="885" fill="#008000">Y</text>
        <text x="290" y="908" fill="#00f">Z</text>
      </g>
    </svg>

    <div class="command-row">
      <div class="command-tabs" role="tablist">
        <button role="tab" aria-selected="true" class="active">Operaciones</button>
        <button role="tab">Croquis</button>
        <button role="tab">Calcular</button>
        <button role="tab">Cotas MBD</button>
        <button role="tab">Complementos de SOLIDWORKS</button>
        <button role="tab" class="mbd">MBD</button>
        <button role="tab">SOLIDWORKS CAM</button>
        <button role="tab">SOLIDWORKS CAM TBM</button>
        <button role="tab">SOLIDWORKS Inspection</button>
      </div>
      <div class="doc-controls">
        <button aria-label="Panel izquierdo"><svg class="icon"><use href="#i-paneleft"/></svg></button>
        <button aria-label="Panel derecho"><svg class="icon"><use href="#i-paneright"/></svg></button>
        <button aria-label="Minimizar documento"><svg class="icon"><use href="#i-min"/></svg></button>
        <button aria-label="Restaurar documento"><svg class="icon"><use href="#i-restore"/></svg></button>
        <button aria-label="Cerrar documento"><svg class="icon"><use href="#i-close"/></svg></button>
      </div>
    </div>

    <div class="panes">
      <aside class="manager">
        <div class="grip"><i class="knob"></i></div>
        <div class="manager-tabs" role="tablist">
          <button role="tab" aria-selected="true" class="active" aria-label="Árbol de operaciones"><svg class="icon"><use href="#i-part"/></svg></button>
          <button role="tab" aria-label="PropertyManager"><svg class="icon"><use href="#i-props"/></svg></button>
          <button role="tab" aria-label="ConfigurationManager"><svg class="icon"><use href="#i-config"/></svg></button>
          <button role="tab" aria-label="DimXpertManager"><svg class="icon"><use href="#i-target"/></svg></button>
          <button role="tab" aria-label="DisplayManager" class="cut"><svg class="icon"><use href="#i-ball"/></svg></button>
          <button class="prev" aria-label="Anterior"></button>
          <button class="next" aria-label="Siguiente"><svg class="chevron" viewBox="0 0 8 12"><path d="M2 1l4 5-4 5"/></svg></button>
        </div>
        <label class="filter"><svg class="icon"><use href="#i-filter"/></svg><input type="text" aria-label="Filtro"></label>
        <ul class="tree">
          <li class="root"><svg class="icon"><use href="#i-part"/></svg>Pieza2&nbsp; (Predeterminado&lt;&lt;Predeterm</li>
          <li class="parent"><svg class="icon"><use href="#i-history"/></svg>Historial</li>
          <li><svg class="icon"><use href="#i-sensor"/></svg>Sensores</li>
          <li class="parent"><svg class="icon"><use href="#i-annot"/></svg>Anotaciones</li>
          <li class="parent"><svg class="icon"><use href="#i-solids"/></svg>Sólidos(1)</li>
          <li><svg class="icon"><use href="#i-material"/></svg>Material &lt;sin especificar&gt;</li>
          <li><svg class="icon"><use href="#i-plane"/></svg>Alzado</li>
          <li><svg class="icon"><use href="#i-plane"/></svg>Planta</li>
          <li><svg class="icon"><use href="#i-plane"/></svg>Vista lateral</li>
          <li><svg class="icon"><use href="#i-origin"/></svg>Origen</li>
          <li class="parent"><svg class="icon"><use href="#i-extrude"/></svg>Saliente-Extruir1</li>
        </ul>
        <div class="rollback"></div>
        <div class="hscroll">
          <button aria-label="Izquierda"><svg class="chevron" viewBox="0 0 8 12"><path d="M6 1L2 6l4 5"/></svg></button>
          <div class="track"><div class="thumb"></div></div>
          <button aria-label="Derecha"><svg class="chevron" viewBox="0 0 8 12"><path d="M2 1l4 5-4 5"/></svg></button>
        </div>
        <div class="handle"><i class="knob"></i></div>
      </aside>

      <section class="viewport">
        <div class="view-tools">
          <button aria-label="Zoom para ajustar"><svg class="icon small"><use href="#i-zoomfit"/></svg></button>
          <button aria-label="Zoom encuadre"><svg class="icon"><use href="#i-zoomarea"/></svg></button>
          <button aria-label="Vista previa"><svg class="icon small"><use href="#i-prevview"/></svg></button>
          <button aria-label="Vista de sección"><svg class="icon small"><use href="#i-section"/></svg></button>
          <button aria-label="Vistas dinámicas"><svg class="icon"><use href="#i-dynview"/></svg></button>
          <button aria-label="Orientación"><svg class="icon"><use href="#i-orient"/></svg></button><button class="drop" aria-label="Más"></button>
          <button aria-label="Estilo de visualización"><svg class="icon"><use href="#i-display"/></svg></button><button class="drop" aria-label="Más"></button>
          <button aria-label="Ocultar"><svg class="icon small"><use href="#i-eye"/></svg></button><button class="drop" aria-label="Más"></button>
          <button aria-label="Editar apariencia"><svg class="icon"><use href="#i-appearance"/></svg></button>
          <button aria-label="Aplicar escena"><svg class="icon"><use href="#i-scene"/></svg></button><button class="drop" aria-label="Más"></button>
          <button aria-label="Configuración de visualización"><svg class="icon small"><use href="#i-monitor"/></svg></button><button class="drop" aria-label="Más"></button>
        </div>
        <div class="task-pane">
          <button class="active" aria-label="Recursos"><svg class="icon"><use href="#i-home"/></svg></button>
          <button aria-label="Biblioteca"><svg class="icon"><use href="#i-books"/></svg></button>
          <button aria-label="Explorador"><svg class="icon"><use href="#i-folder"/></svg></button>
          <button aria-label="Paleta de visualización"><svg class="icon"><use href="#i-palette"/></svg></button>
          <button aria-label="Apariencias"><svg class="icon small"><use href="#i-ball"/></svg></button>
          <button aria-label="Propiedades personalizadas"><svg class="icon"><use href="#i-props"/></svg></button>
          <button aria-label="Foro"><svg class="icon"><use href="#i-chat"/></svg></button>
        </div>
      </section>
    </div>
  </main>

  <div class="model-tabs">
    <div class="pager">
      <button aria-label="Primera"><svg viewBox="0 0 12 12"><path d="M2 1h1v10H2zM10 1v10L4 6z"/></svg></button>
      <button aria-label="Anterior"><svg viewBox="0 0 12 12"><path d="M8 1v10L3 6z"/></svg></button>
      <button aria-label="Siguiente"><svg viewBox="0 0 12 12"><path d="M4 1v10l5-5z"/></svg></button>
      <button aria-label="Última"><svg viewBox="0 0 12 12"><path d="M9 1h1v10H9zM2 1v10l6-5z"/></svg></button>
    </div>
    <button class="tab active">Modelo</button>
    <button class="tab">Vistas 3D</button>
    <button class="tab wide">Estudio de movimiento 1</button>
  </div>

  <div class="snap-bar">
    <i class="dots"></i>
    <button aria-label="Punto"><svg class="icon"><use href="#i-s-point"/></svg></button>
    <button aria-label="Centro"><svg class="icon"><use href="#i-s-circle"/></svg></button>
    <button aria-label="Punto medio"><svg class="icon"><use href="#i-s-mid"/></svg></button>
    <button aria-label="Cuadrante"><svg class="icon"><use href="#i-s-quad"/></svg></button>
    <button aria-label="Intersección de croquis"><svg class="icon"><use href="#i-s-inter"/></svg></button>
    <button aria-label="Más cercano"><svg class="icon"><use href="#i-s-near"/></svg></button>
    <button class="sep" aria-label="Tangente" disabled><svg class="icon"><use href="#i-s-tan"/></svg></button>
    <button aria-label="Perpendicular" disabled><svg class="icon"><use href="#i-s-perp"/></svg></button>
    <button aria-label="Paralelo" disabled><svg class="icon"><use href="#i-s-par"/></svg></button>
    <button aria-label="Horizontal/Vertical" disabled><svg class="icon"><use href="#i-s-hv"/></svg></button>
    <button aria-label="Hasta puntos"><svg class="icon"><use href="#i-s-hvp"/></svg></button>
    <button class="sep" aria-label="Longitud" disabled><svg class="icon"><use href="#i-s-len"/></svg></button>
    <button aria-label="Rejilla"><svg class="icon"><use href="#i-s-grid"/></svg></button>
    <button aria-label="Ángulo" disabled><svg class="icon"><use href="#i-s-ang"/></svg></button>
    <i class="end"></i>
  </div>

  <footer class="status">
    <span class="version">SOLIDWORKS Premium 2019 SP0.0</span>
    <i class="cell"></i><i class="cell"></i><i class="cell wide"></i>
    <span class="units">MMGS</span>
    <button class="drop up" aria-label="Unidades"></button>
    <svg class="icon small"><use href="#i-tag"/></svg>
  </footer>
</body>
</html>
```

FILE: styles.css
```css
html, body {
  height: 100%;
  margin: 0;
  overflow: hidden;
}
* {
  box-sizing: border-box;
}
body {
  display: flex;
  flex-direction: column;
  background: #f7f7f7;
  color: #000;
  font: 11px/13px "Noto Sans", "Open Sans", sans-serif;
}
button {
  display: flex;
  align-items: center;
  justify-content: center;
  flex: none;
  margin: 0;
  padding: 0;
  border: 0;
  background: none;
  color: inherit;
  font: inherit;
}
a {
  color: inherit;
  text-decoration: none;
}
.symbols {
  position: absolute;
  width: 0;
  height: 0;
}
.icon {
  display: block;
  flex: none;
  width: 20px;
  height: 20px;
}
.icon.small {
  width: 18px;
  height: 18px;
}
.drop {
  width: 13px;
  height: 20px;
}
.drop::before,
.tool.more::after {
  content: "";
  border: 3px solid transparent;
  border-top-color: #333;
  border-bottom: 0;
}
.drop.up::before {
  border-bottom: 3px solid #333;
  border-top: 0;
}
.knob {
  width: 6px;
  height: 6px;
  border: 1px solid #999;
  border-radius: 50%;
  background: #d4d4d4;
}

/* title bar */
.titlebar {
  display: flex;
  align-items: center;
  flex: none;
  height: 31px;
  padding-left: 10px;
  border-bottom: 1px solid #868686;
}
.logo {
  display: flex;
  align-items: flex-start;
  align-self: flex-start;
  position: relative;
  z-index: 2;
  flex: none;
  width: 145px;
  height: 35px;
  padding-left: 5px;
  border: 1px solid #868686;
  border-top: 0;
  background: linear-gradient(160deg, #fff 40%, #d8d8d8);
}
.logo-mark {
  width: 28px;
  height: 28px;
}
.logo-text {
  padding: 10px 0 0 4px;
  color: #da291c;
  font: italic 300 17px/18px "Open Sans", sans-serif;
}
.logo-text b {
  font-weight: 800;
}
.menu {
  display: flex;
  flex: none;
  gap: 15px;
  width: 358px;
  padding-left: 28px;
}
.pin {
  width: 62px;
  height: 30px;
  padding-left: 30px;
  border-right: 2px solid #aaa;
}
.quick {
  display: flex;
  align-items: center;
  padding-left: 12px;
}
.q {
  width: 26px;
  height: 24px;
}
.select-tool {
  display: flex;
  margin-left: 1px;
  border: 1px solid #8a8a8a;
}
.select-tool .q {
  width: 24px;
  background: #b3b3b3;
}
.select-tool .drop {
  height: 24px;
}
.doc-title {
  flex: 1;
  margin: 0;
  font-size: 11px;
  font-weight: normal;
  text-align: center;
}
.search {
  display: flex;
  align-items: center;
  flex: none;
  width: 252px;
  height: 23px;
  padding: 0 2px;
  border: 1px solid #111;
  background: #eeeff4;
}
.search input {
  flex: 1;
  min-width: 0;
  padding: 0 0 0 4px;
  border: 0;
  outline: 0;
  background: none;
  font: inherit;
}
.search input::placeholder {
  color: #666;
  opacity: 1;
}
.search-go {
  width: 20px;
}
.window-controls {
  display: flex;
  align-items: center;
  color: #444;
}
.window-controls button {
  width: 26px;
}
.window-controls button:first-child {
  width: 30px;
}
.window-controls .drop {
  width: 12px;
}

/* command ribbon */
.ribbon {
  display: flex;
  flex: none;
  height: 87px;
  padding: 6px 0 2px 6px;
  border-bottom: 1px solid #868686;
}
.tool {
  flex-direction: column;
  justify-content: flex-start;
  gap: 2px;
  position: relative;
  padding-top: 11px;
  white-space: nowrap;
}
.tool.more {
  padding-top: 4px;
}
.tool.more::after {
  position: absolute;
  bottom: 9px;
}
.sep {
  border-left: 1px solid #c0c0c0;
}
.tool.active {
  margin-left: 6px;
  padding-top: 10px;
  border: 1px solid #666;
  background: #b1b1b1;
  box-shadow: -2px 0 #f7f7f7, -3px 0 #c0c0c0;
}
.w-base { width: 78px; }
.w-wide { width: 70px; }
.w-mid { width: 66px; }
.w-slim { width: 40px; }
.w-narrow { width: 46px; }
.stack {
  display: flex;
  flex-direction: column;
  flex: none;
  margin-top: -1px;
}
.stack button {
  justify-content: flex-start;
  gap: 6px;
  height: 26px;
  white-space: nowrap;
}
.stack.first { width: 159px; padding-left: 2px; }
.stack.second { width: 123px; padding-left: 2px; }
.stack.third { width: 125px; padding-left: 4px; }
.stack.fourth { width: 103px; padding-left: 4px; }

/* graphics area and its panes */
.workspace {
  display: flex;
  flex-direction: column;
  flex: 1;
  min-height: 0;
  position: relative;
}
.scene {
  position: absolute;
  inset: 0;
  width: 100%;
  height: 100%;
}
.triad text {
  font: 10px "Liberation Sans", sans-serif;
}
.command-row {
  display: flex;
  justify-content: space-between;
  flex: none;
  position: relative;
  height: 22px;
}
.command-tabs {
  display: flex;
}
.command-tabs button {
  padding: 0 9px;
  border-right: 1px solid #868686;
  border-bottom: 1px solid #868686;
  background: #d3d3d3;
  color: #222;
}
.command-tabs .active {
  padding: 0 8px;
  border-bottom-color: #f7f7f7;
  background: #f7f7f7;
  color: #333;
  font-weight: bold;
}
.command-tabs .mbd {
  width: 58px;
}
.doc-controls {
  display: flex;
  padding: 5px 6px 0 0;
  color: #a0a0a0;
}
.doc-controls button {
  width: 26px;
  height: 20px;
}
.panes {
  display: flex;
  flex: 1;
  min-height: 0;
  position: relative;
}
.manager {
  display: flex;
  flex-direction: column;
  flex: none;
  position: relative;
  width: 230px;
  padding: 0 2px 5px 1px;
  border-top: 1px solid #9fb4bc;
  border-right: 1px solid #868686;
  background: #f7f7f7;
}
.grip {
  display: flex;
  align-items: center;
  justify-content: center;
  flex: none;
  height: 16px;
  margin: 3px 0 4px;
  border-top: 1px solid #c6c6c6;
  border-bottom: 1px solid #c6c6c6;
}
.manager-tabs {
  display: flex;
  flex: none;
  height: 25px;
  border-top: 1px solid #868686;
  background: #d3d3d3;
}
.manager-tabs button {
  width: 40px;
  border-right: 1px solid #868686;
  border-bottom: 1px solid #868686;
}
.manager-tabs .active {
  width: 41px;
  border-bottom: 0;
  background: #f7f7f7;
}
.manager-tabs .cut {
  width: 29px;
  justify-content: flex-end;
  border-right: 0;
}
.manager-tabs .prev,
.manager-tabs .next {
  align-self: flex-end;
  width: 15px;
  height: 19px;
  border: 1px solid #ccc;
  background: #f7f7f7;
}
.manager-tabs .prev::before {
  content: "";
  border: 4px solid transparent;
  border-left: 0;
  border-right-color: #000;
}
.manager-tabs .next {
  align-self: flex-start;
  width: 21px;
  height: 23px;
  border: 0;
}
.chevron {
  width: 8px;
  height: 12px;
  fill: none;
  stroke: #555;
  stroke-width: 2;
}
.filter {
  display: flex;
  align-items: center;
  flex: none;
  height: 26px;
  margin: 0 2px 1px 4px;
  border: 1px solid #c6c6c6;
}
.filter input {
  flex: 1;
  min-width: 0;
  border: 0;
  outline: 0;
  background: none;
  font: inherit;
}
.tree {
  margin: 0;
  padding: 0;
  list-style: none;
}
.tree li {
  display: flex;
  align-items: center;
  gap: 4px;
  height: 22px;
  padding-left: 25px;
  overflow: hidden;
  white-space: nowrap;
}
.tree .root {
  padding-left: 2px;
}
.tree .parent {
  padding-left: 9px;
}
.tree .parent::before {
  content: "";
  margin-right: 8px;
  border: 4px solid transparent;
  border-left-color: #666;
  border-right: 0;
}
.rollback {
  flex: none;
  height: 4px;
  background: #368ec7;
}
.hscroll {
  display: flex;
  flex: none;
  height: 16px;
  margin-top: auto;
  background: #f0f0f0;
}
.hscroll button {
  width: 17px;
}
.track {
  flex: 1;
}
.thumb {
  width: 55%;
  height: 100%;
  background: #cdcdcd;
}
.handle {
  display: flex;
  align-items: center;
  justify-content: center;
  position: absolute;
  top: 385px;
  right: -9px;
  width: 9px;
  height: 39px;
  border: 1px solid #868686;
  border-left: 0;
  background: #f7f7f7;
}
.viewport {
  display: flex;
  flex-direction: column;
  flex: 1;
  min-width: 0;
}
.view-tools {
  display: flex;
  align-items: center;
  justify-content: center;
  height: 29px;
  padding-right: 4px;
}
.view-tools button {
  width: 26px;
}
.view-tools .drop {
  width: 14px;
}
.view-tools .drop::before {
  border-top-color: #999;
}
.task-pane {
  align-self: flex-end;
  width: 26px;
  border-left: 1px solid #868686;
  border-bottom: 1px solid #868686;
}
.task-pane button {
  width: 25px;
  height: 24px;
  border-top: 1px solid #868686;
  background: #d3d3d3;
}
.task-pane .active {
  background: #fff;
}

/* bottom bars */
.model-tabs {
  display: flex;
  flex: none;
  height: 15px;
  padding-left: 2px;
  border-top: 1px solid #868686;
}
.pager {
  display: flex;
  width: 65px;
  border-right: 1px solid #777;
  background: #a6a6a6;
}
.pager button {
  width: 16px;
  border: 1px solid #bbb;
}
.pager svg {
  width: 10px;
  height: 10px;
  fill: #7d7d7d;
}
.model-tabs .tab {
  padding: 0 10px 3px;
  border-right: 1px solid #868686;
  background: #d3d3d3;
}
.model-tabs .active {
  padding: 0 9px 3px 12px;
  background: #f7f7f7;
  font-weight: bold;
}
.model-tabs .wide {
  padding-right: 22px;
}
.snap-bar {
  display: flex;
  align-items: center;
  flex: none;
  height: 34px;
  padding: 2px 0 0 4px;
  border-bottom: 1px solid #868686;
}
.snap-bar button {
  width: 27px;
  height: 22px;
}
.snap-bar .sep {
  width: 31px;
  margin-left: 4px;
  padding-left: 4px;
  border-color: #999;
}
.dots {
  width: 2px;
  height: 26px;
  margin-right: 7px;
  background: repeating-linear-gradient(#aaa 0 2px, transparent 2px 4px);
}
.end {
  align-self: flex-end;
  height: 31px;
  margin-left: 8px;
  border-left: 1px solid #868686;
}
.status {
  display: flex;
  align-items: center;
  flex: none;
  height: 17px;
  padding: 0 3px 0 1px;
}
.version {
  flex: 1;
}
.cell {
  width: 8px;
  height: 17px;
  border-left: 1px solid #ccc;
}
.cell.wide {
  width: 17px;
  border-right: 1px solid #ccc;
}
.units {
  width: 90px;
  text-align: right;
}
.status .drop {
  margin: 0 61px 0 37px;
}
```
